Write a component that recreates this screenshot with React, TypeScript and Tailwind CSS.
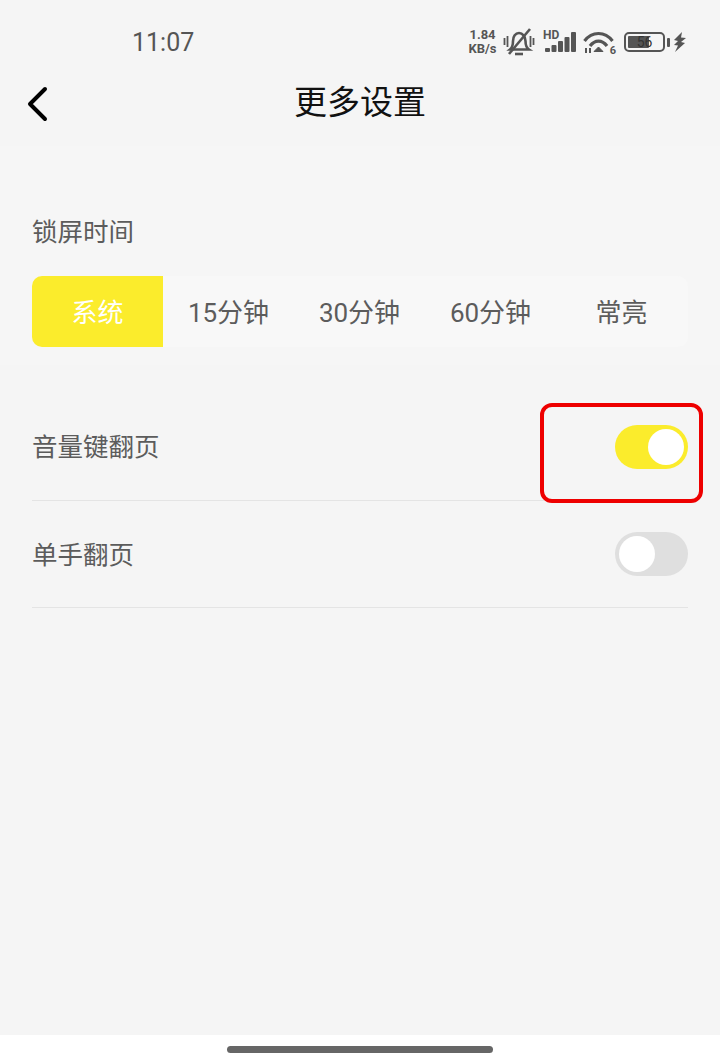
const FONT = "font-['Roboto','Noto_Sans_CJK_SC',sans-serif]";
const TIMES = ['15分钟', '30分钟', '60分钟', '常亮'];

function StatusIcons() {
  return (
    <div className="flex items-center text-[#555]">
      <div className="mr-[2px] flex w-[29px] flex-col items-center text-[13px] font-bold leading-[14px]">
        <span>1.84</span>
        <span>KB/s</span>
      </div>
      {/* Muted bell */}
      <svg width="32" height="28" viewBox="0 0 32 28" className="ml-[4px]" fill="none" stroke="currentColor" strokeWidth="2.6">
        <path d="M7 21.500c2.500-2 3-4 3-8.500 0-4.500 2.500-8 6-8s6.500 3.500 6.500 8c0 4.500.5 6.500 3.500 8.500z" />
        <path d="M12 26h8" />
        <path d="M6 26 27 1" />
        <path d="M1.500 10v7M4.500 8v11M27.500 8v11M30.500 10v7" strokeWidth="1.8" />
      </svg>
      {/* Signal */}
      <div className="relative ml-[8px] h-[28px] w-[33px]">
        <span className="absolute left-0 top-[2px] text-[12px] font-bold leading-[10px]">HD</span>
        <svg width="33" height="28" viewBox="0 0 33 28" fill="currentColor">
          <rect x="2" y="20" width="5" height="4" rx="1" />
          <rect x="8.500" y="17" width="5" height="7" rx="1" />
          <rect x="15" y="13" width="5" height="11" rx="1" />
          <rect x="21.500" y="9" width="5" height="15" rx="1" />
          <rect x="28" y="4" width="5" height="20" rx="1" />
        </svg>
      </div>
      {/* Wifi */}
      <div className="relative ml-[7px] h-[28px] w-[33px]">
        <svg width="33" height="28" viewBox="0 0 33 28" fill="none" stroke="currentColor" strokeWidth="3.200">
          <path d="M1.500 13C9 3 22 3 29.500 13" />
          <path d="M7 18c5-6.500 12-6.500 17 0" />
          <path d="M15.500 19l4.500 4.500h-9z" fill="currentColor" strokeWidth="1" />
          <path d="M3 20v5M7 20v5" strokeWidth="2" />
        </svg>
        <span className="absolute right-[0px] top-[17px] text-[11px] font-bold leading-[11px]">6</span>
      </div>
      {/* Battery */}
      <div className="relative ml-[8px] flex h-[20px] w-[41px] items-center justify-center rounded-[5px] border-2 border-[#555] text-[14px] leading-none">
        <div className="absolute bottom-[2px] left-[2px] top-[2px] w-[21px] rounded-[1px] bg-[#555]" />
        <span className="relative text-[#333]">56</span>
      </div>
      <div className="ml-[2px] h-[9px] w-[3px] rounded-[1px] bg-[#555]" />
      <svg width="13" height="20" viewBox="0 0 13 20" fill="currentColor" className="ml-[3px]">
        <path d="M9 0 1 8l4 1-4 4 4 .5L2 20l10-9-4-1 5-4-5-.5z" />
      </svg>
    </div>
  );
}

function Toggle({ on }: { on: boolean }) {
  return (
    <div className={`flex h-[44px] w-[73px] items-center rounded-full px-[4px] ${on ? 'justify-end bg-[#fbec2c]' : 'justify-start bg-[#dfdfdf]'}`}>
      <div className="h-[36px] w-[36px] rounded-full bg-white" />
    </div>
  );
}

export default function App() {
  return (
    <div className={`relative flex h-[1064px] w-[720px] flex-col bg-[#f5f5f5] ${FONT}`}>
      {/* Status bar */}
      <div className="flex h-[70px] items-center justify-between pl-[132px] pr-[34px] pt-[14px]">
        <span className="text-[25px] leading-none text-[#555]">11:07</span>
        <StatusIcons />
      </div>

      {/* Title bar */}
      <div className="relative flex h-[76px] items-start justify-center">
        <svg width="24" height="36" viewBox="0 0 24 36" fill="none" stroke="black" strokeWidth="4" strokeLinecap="round" strokeLinejoin="round" className="absolute left-[25px] top-[16px]">
          <path d="M20 3 5 18l15 15" />
        </svg>
        <span className="pt-[10px] text-[33px] leading-[46px] text-[#111]">更多设置</span>
      </div>

      {/* Lock screen time */}
      <div className="flex h-[219px] flex-col bg-[#f6f6f6] px-[32px] pt-[68px]">
        <span className="text-[25.5px] leading-[36px] text-[#5c5c5c]">锁屏时间</span>
        <div className="mt-[26px] flex h-[71px] rounded-[10px] bg-[#f8f8f8]">
          <div className="flex w-[131px] items-center justify-center rounded-l-[10px] bg-[#fbec2c] pt-[4px] text-[26px] text-white">
            系统
          </div>
          {TIMES.map((t) => (
            <div key={t} className="flex w-[131px] items-center justify-center pt-[4px] text-[26px] text-[#5c5c5c]">
              {t}
            </div>
          ))}
        </div>
      </div>

      {/* Page turning */}
      <div className="mt-[28px] flex flex-col px-[32px]">
        <div className="flex h-[108px] items-center justify-between border-b border-[#e4e4e4]">
          <span className="pt-[2px] text-[25.5px] text-[#5c5c5c]">音量键翻页</span>
          <Toggle on />
        </div>
        <div className="flex h-[107px] items-center justify-between border-b border-[#e4e4e4]">
          <span className="pt-[2px] text-[25.5px] text-[#5c5c5c]">单手翻页</span>
          <Toggle on={false} />
        </div>
      </div>

      {/* Red highlight */}
      <div className="absolute left-[540px] top-[403px] h-[100px] w-[163px] rounded-[12px] border-[4px] border-[#ee0000]" />

      {/* Home indicator */}
      <div className="mt-auto flex h-[29px] justify-center bg-white pr-[1px] pt-[11px]">
        <div className="h-[7px] w-[266px] rounded-full bg-[#666]" />
      </div>
    </div>
  );
}
